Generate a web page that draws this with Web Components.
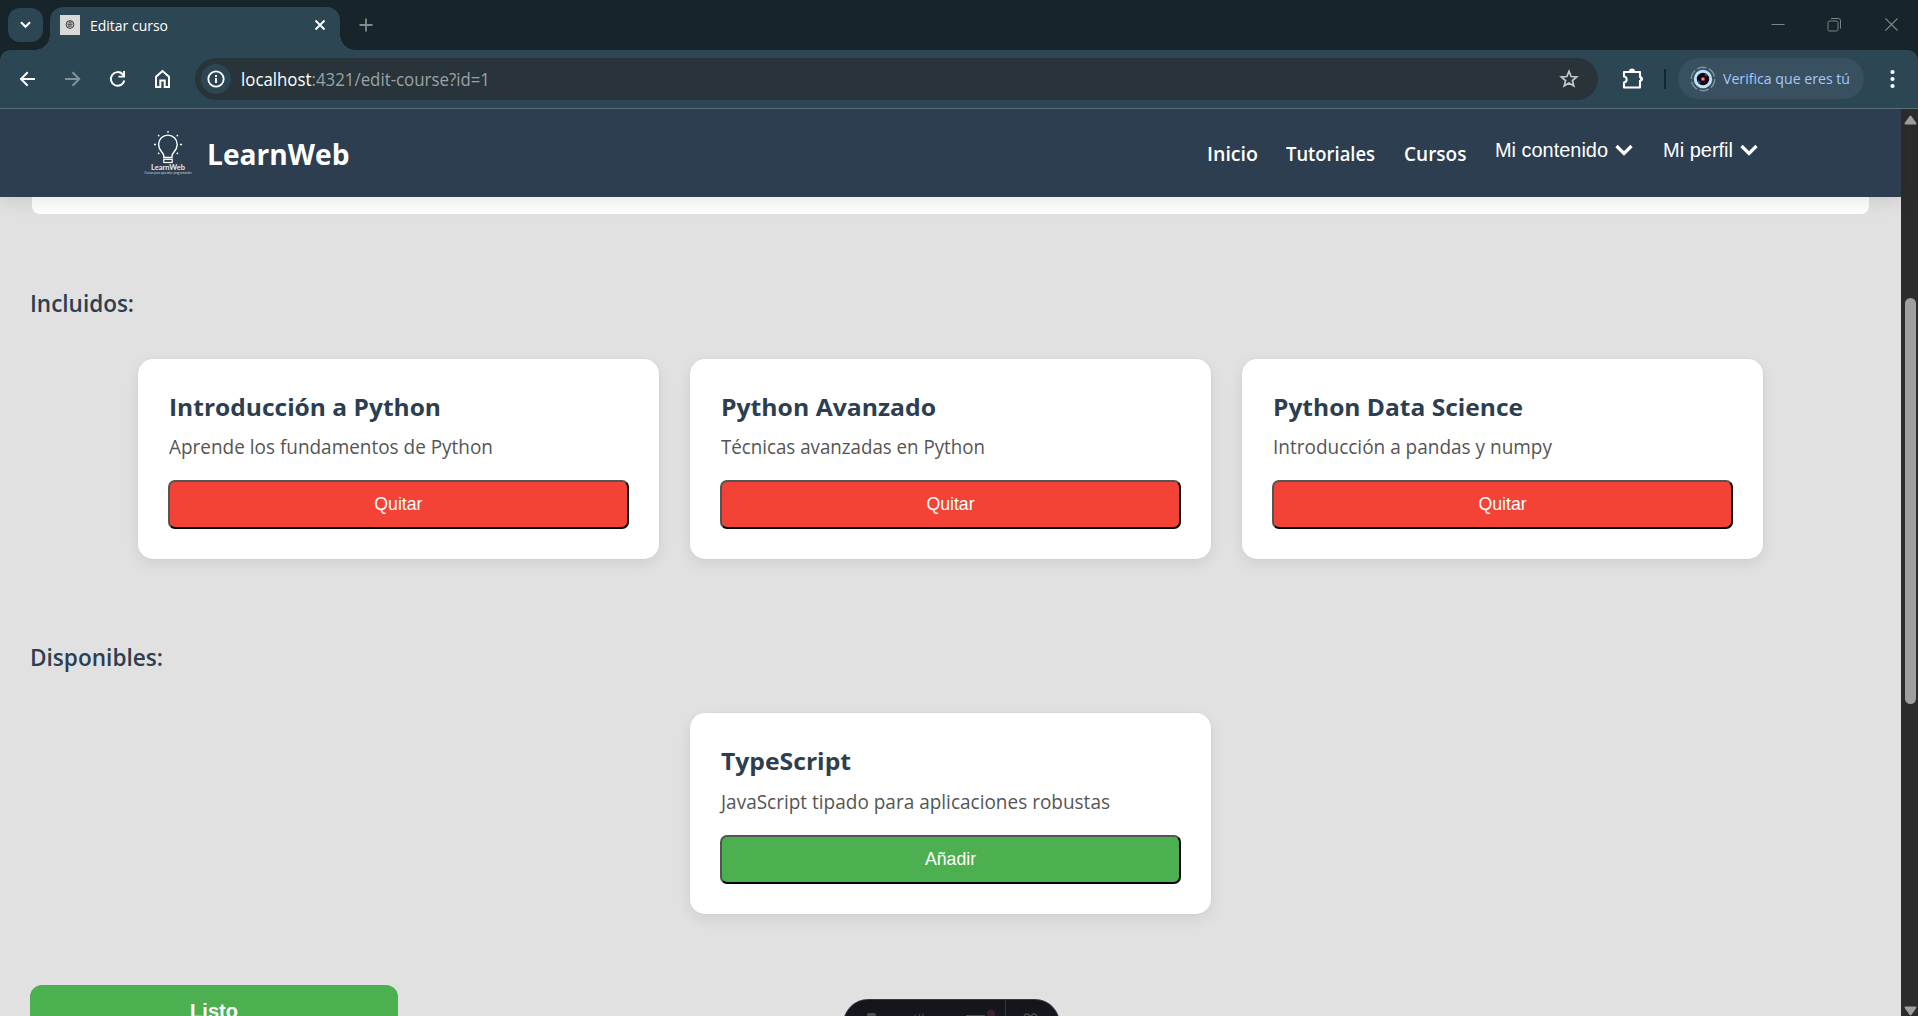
<!DOCTYPE html>
<html lang="es">
<head>
<meta charset="utf-8">
<title>Editar curso</title>
<style>
html,body{margin:0;height:100%;overflow:hidden;background:#e1e1e1}
body{display:flex;flex-direction:column;font-family:"Open Sans","Noto Sans",sans-serif;color:#2c3e50}
</style>
</head>
<body>
<browser-tabs></browser-tabs>
<browser-toolbar></browser-toolbar>
<browser-view>
  <site-header></site-header>
  <course-page>
    <section-title style="margin-top:67px"><fit-text w="104">Incluidos:</fit-text></section-title>
    <card-grid style="margin-top:34px">
      <tutorial-card kind="remove"><fit-text slot="title" w="272">Introducción a Python</fit-text><fit-text slot="desc" w="324">Aprende los fundamentos de Python</fit-text><span>Quitar</span></tutorial-card>
      <tutorial-card kind="remove"><fit-text slot="title" w="215">Python Avanzado</fit-text><fit-text slot="desc" w="264">Técnicas avanzadas en Python</fit-text><span>Quitar</span></tutorial-card>
      <tutorial-card kind="remove"><fit-text slot="title" w="250">Python Data Science</fit-text><fit-text slot="desc" w="279">Introducción a pandas y numpy</fit-text><span>Quitar</span></tutorial-card>
    </card-grid>
    <section-title style="margin-top:76px"><fit-text w="133">Disponibles:</fit-text></section-title>
    <card-grid style="margin-top:34px">
      <tutorial-card kind="add" style="grid-column:2"><fit-text slot="title" w="130">TypeScript</fit-text><fit-text slot="desc" w="389">JavaScript tipado para aplicaciones robustas</fit-text><span>Añadir</span></tutorial-card>
    </card-grid>
    <done-button>Listo</done-button>
  </course-page>
  <scroll-bar slot="bar"></scroll-bar>
  <dev-dock slot="dock"></dev-dock>
</browser-view>
<script>
function define(name, html, ready){
  const t=document.createElement('template'); t.innerHTML=html;
  customElements.define(name, class extends HTMLElement{
    constructor(){super();this.attachShadow({mode:'open'}).append(t.content.cloneNode(true));}
    connectedCallback(){ if(ready) ready(this); }
  });
}

/* One line of text condensed or widened to the width in its "w" attribute. */
define('fit-text',`<style>
:host{display:inline-block;white-space:nowrap}
span{display:inline-block;transform-origin:0 50%}
</style><span><slot></slot></span>`, el=>{
  const s=el.shadowRoot.querySelector('span'), w=+el.getAttribute('w');
  const fit=()=>{s.style.transform='none';el.style.width='auto';const n=s.offsetWidth?s.getBoundingClientRect().width:w;
    el.style.width=w+'px';s.style.transform='scaleX('+w/n+')';};
  fit(); requestAnimationFrame(fit);
});

define('browser-tabs',`<style>
:host{display:flex;height:50px;background:#172429;flex:none;box-sizing:border-box;align-items:flex-start;padding-left:8px}
.menu{width:35px;height:34px;margin-top:8px;border-radius:12px;background:#2d4654;display:grid;place-items:center}
.tab{margin:7px 0 0 7px;width:290px;height:43px;background:#2d4654;border-radius:13px 13px 0 0;display:flex;align-items:center;box-sizing:border-box;padding:0 14px 7px 10px;position:relative;color:#fff;font-size:15px}
.tab:before,.tab:after{content:"";position:absolute;bottom:0;width:15px;height:15px}
.tab:before{left:-15px;background:radial-gradient(circle at 0 0,transparent 14.5px,#2d4654 15px)}
.tab:after{right:-15px;background:radial-gradient(circle at 100% 0,transparent 14.5px,#2d4654 15px)}
fit-text{margin-left:10px;flex:none}
.x{margin-left:auto}
.plus{margin:18px 0 0 18.500px}
.win{margin:17px 19.500px 0 auto;display:flex;gap:42px}
svg{display:block}
</style>
<div class="menu"><svg width="11" height="8" viewBox="0 0 11 8"><path d="M1 1.3 5.5 5.8 10 1.3" fill="none" stroke="#fff" stroke-width="2.1"/></svg></div>
<div class="tab"><svg width="20" height="20"><rect width="20" height="20" fill="#d9d9d9"/><circle cx="10" cy="9.5" r="3.9" fill="#bbb" stroke="#444" stroke-width="1"/><path d="M7.5 9.2h5M8 11h3.5M9 7.2h2.5" stroke="#333" stroke-width=".9"/></svg>
<fit-text w="78">Editar curso</fit-text>
<svg class="x" width="12" height="12" viewBox="0 0 12 12"><path d="M1.5 1.5l9 9M10.5 1.5l-9 9" stroke="#fff" stroke-width="1.8"/></svg></div>
<svg class="plus" width="14" height="14"><path d="M7 .5v13M.5 7h13" stroke="#838b8d" stroke-width="1.8"/></svg>
<div class="win"><svg width="14" height="15"><path d="M.5 7.5h13" stroke="#7c8588"/></svg>
<svg width="15" height="15"><rect x="1" y="4" width="10" height="10" rx="1.5" fill="none" stroke="#7c8588"/><path d="M4 1.5h7.5a2 2 0 0 1 2 2V11.5" fill="none" stroke="#7c8588"/></svg>
<svg width="15" height="15"><path d="M1.5 1.5l12 12M13.500 1.5l-12 12" stroke="#7c8588" stroke-width="1.1"/></svg></div>`);

define('browser-toolbar',`<style>
:host{display:block;height:59px;flex:none;background:#172429}
.bar{height:59px;box-sizing:border-box;background:#2d4654;border-bottom:1px solid #5a7078;border-radius:10px 10px 0 0;display:flex;align-items:center;padding:0 18px 1px 18px}
svg{display:block;flex:none}
.nav{display:flex;gap:25px;width:177px;flex:none}
.omni{width:1403px;height:42px;box-sizing:border-box;border-radius:21px;background:#28343a;display:flex;align-items:center;padding:0 19px 0 6px;flex:none}
.info{width:30px;height:30px;border-radius:50%;background:#2d4654;display:grid;place-items:center}
.url{margin-left:10px;font-size:17.6px;color:#9aa2a6;display:flex;padding-top:1px}
.url b{font-weight:400;color:#fff}
.star{margin-left:auto}
.sep{width:2px;height:20px;background:#17262c;margin:0 12px 0 20px}
.chip{width:186px;height:41px;border-radius:21px;background:#385060;display:flex;align-items:center;box-sizing:border-box;padding-left:11.500px;gap:7px;font-size:14.6px;color:#a8c7fa}
.chip fit-text{padding-bottom:2px}
.dots{margin-left:24px}
</style><div class="bar">
<div class="nav">
<svg width="20" height="20" viewBox="0 0 20 20"><path d="M17 10H3.500M9.700 3.300 3 10l6.700 6.700" fill="none" stroke="#fff" stroke-width="2"/></svg>
<svg width="20" height="20" viewBox="0 0 20 20"><path d="M2 10h14M9.500 3.300 16.200 10l-6.700 6.700" fill="none" stroke="#82929a" stroke-width="2"/></svg>
<svg width="20" height="20" viewBox="0 0 20 20"><path d="M16.300 11.500A6.800 6.800 0 1 1 14.600 5.200L16 6.700" fill="none" stroke="#fff" stroke-width="2"/><path d="M17 2v6.500h-6.500V6.700h4.600V2z" fill="#fff"/></svg>
<svg width="20" height="20" viewBox="0 0 20 20"><path d="M3 18V7.700L9.500 2 16 7.700V18h-4.300v-6.500H7.300V18z" fill="none" stroke="#fff" stroke-width="2"/></svg>
</div>
<div class="omni"><div class="info"><svg width="18" height="18"><circle cx="9" cy="9" r="7.700" fill="none" stroke="#fff" stroke-width="1.800"/><path d="M9 8v5M9 5v2" stroke="#fff" stroke-width="1.900"/></svg></div>
<div class="url"><fit-text w="249"><b>localhost</b>:4321/edit-course?id=1</fit-text></div>
<svg class="star" width="20" height="20" viewBox="0 0 20 20"><path d="M10 2.300l2.100 5.200 5.600.4-4.300 3.600 1.400 5.500L10 14l-4.800 3 1.400-5.500L2.300 7.900l5.600-.4z" fill="none" stroke="#c4c8ca" stroke-width="1.700"/></svg></div>
<svg style="margin-left:23px" width="23" height="23" viewBox="0 0 23 23"><path d="M3 5h16v5.300h.8a1.800 1.800 0 0 1 0 3.400H19V20.500H3V15.500c3.500-.5 3.500-5.500 0-6z" fill="none" stroke="#fff" stroke-width="2.100" stroke-linejoin="round"/><path d="M8 4.500a3 3 0 0 1 6 0z" fill="#fff"/><path d="M19 9.500a3 3 0 0 1 0 5z" fill="#fff"/></svg>
<div class="sep"></div>
<div class="chip"><svg width="26" height="26"><circle cx="13" cy="13" r="11.700" fill="none" stroke="#82939e" stroke-width="1.400" stroke-dasharray="9.500 2.700"/><circle cx="13" cy="13" r="7.700" fill="#080713" stroke="#bfe2fb" stroke-width="3"/><path d="M15 8l2 2M8 15l2 2" stroke="#4b4964" stroke-width="2"/><circle cx="13" cy="13" r="2.100" fill="#e9258c"/><circle cx="13" cy="13" r=".9" fill="#ffcf33"/></svg><fit-text w="127">Verifica que eres tú</fit-text></div>
<svg class="dots" width="9" height="20"><g fill="#fff"><circle cx="4.500" cy="3" r="2.100"/><circle cx="4.500" cy="10" r="2.100"/><circle cx="4.500" cy="17" r="2.100"/></g></svg>
</div>`);

define('browser-view',`<style>
:host{display:flex;flex:1;min-height:0;overflow:hidden;position:relative}
.doc{flex:1;min-width:0;display:flex;flex-direction:column}
</style><div class="doc"><slot></slot></div><slot name="bar"></slot><slot name="dock"></slot>`);

define('site-header',`<style>
:host{display:flex;height:88px;flex:none;background:#2c3e50;box-shadow:0 4px 18px rgba(0,0,0,.1);position:relative;z-index:2;box-sizing:border-box;padding:0 143px 0 143px;color:#fff}
svg{display:block;flex:none}
.logo{margin-top:20px}
.name{font-size:28.300px;font-weight:700;margin:23px 0 0 14px;line-height:44px}
nav{display:flex;margin-left:auto;font-size:19.200px;font-weight:600;line-height:30px}
nav fit-text{margin-top:30px;margin-right:28.500px}
.m{display:flex;align-items:center;gap:7px;height:30px;margin-top:26px;font:20px/30px "Liberation Sans",Arial,sans-serif}
.m fit-text{margin:0}
.m+.m{margin-left:30.500px}
</style>
<svg class="logo" width="50" height="50" viewBox="0 0 50 50"><g fill="none" stroke="#fff" stroke-width="1.400"><path d="M20.800 28.500v-1.600c0-3.500-5.200-5-5.200-11.500a9.300 9.300 0 0 1 18.600 0c0 6.500-5.200 8-5.200 11.500v1.600z"/><rect x="20.800" y="30.300" width="8.400" height="3.200" stroke-width="1.200"/><path d="M25 2v1.800M15.200 6l1 1.200M34.800 6l-1 1.200M11 15.500h2M37 15.500h2M15.200 25l1-1.200M34.800 25l-1-1.200"/></g><text x="8" y="41" font-family="Lato,sans-serif" font-weight="700" font-size="6.500" fill="#e8ebee" textLength="34" lengthAdjust="spacingAndGlyphs">LearnWeb</text><text x="1.500" y="45" font-family="Lato,sans-serif" font-size="3" fill="#cfd5da" textLength="47" lengthAdjust="spacingAndGlyphs">Cursos para aprender programación</text></svg>
<div class="name"><fit-text w="142.500">LearnWeb</fit-text></div>
<nav><fit-text w="51">Inicio</fit-text><fit-text w="89">Tutoriales</fit-text><fit-text w="62.500">Cursos</fit-text>
<div class="m"><fit-text w="113">Mi contenido</fit-text><svg width="18" height="12"><path d="M1.500 2 9 9.500 16.500 2" fill="none" stroke="#fff" stroke-width="3.200"/></svg></div>
<div class="m"><fit-text w="70">Mi perfil</fit-text><svg width="18" height="12"><path d="M1.500 2 9 9.500 16.500 2" fill="none" stroke="#fff" stroke-width="3.200"/></svg></div></nav>`);

define('course-page',`<style>
:host{display:flex;flex-direction:column;align-items:stretch;padding:0 30px}
.panel{height:17px;margin:0 2px;background:#fff;border-radius:0 0 8px 8px;flex:none}
</style><div class="panel"></div><slot></slot>`);

define('section-title',`<style>
:host{display:block;height:44px;line-height:44px;font-size:24px;font-weight:600;flex:none;color:#2c3e50}
</style><slot></slot>`);

define('card-grid',`<style>
:host{display:grid;grid-template-columns:repeat(3,1fr);gap:31.250px;width:1625px;align-self:center;flex:none}
</style><slot></slot>`);

define('tutorial-card',`<style>
:host{display:flex;flex-direction:column;box-sizing:border-box;height:200px;background:#fff;border-radius:15px;padding:30px;box-shadow:0 5px 15px rgba(0,0,0,.08),0 0 0 1px rgba(0,0,0,.015)}
h3{margin:0 0 0 .5px;height:36px;line-height:36px;font-size:24px;font-weight:700;color:#2c3e50}
p{margin:9px 0 0 .5px;height:26px;line-height:26px;font-size:19.200px;color:#555}
button{margin:20px 0 0;height:49px;border:2px outset #000;border-radius:7px;font:17.700px "Liberation Sans",Arial,sans-serif;color:#fff;padding:0;background:#f44336}
:host([kind=add]){height:201px}
:host([kind=add]) p{margin-top:10px}
:host([kind=add]) button{background:#4caf50}
</style><h3><slot name="title"></slot></h3><p><slot name="desc"></slot></p><button><slot></slot></button>`);

define('done-button',`<style>
:host{display:block;width:368px;height:60px;flex:none;margin-top:71px;border-radius:12px;background:#4caf50;color:#fff;font:700 20px/53px "Liberation Sans",Arial,sans-serif;text-align:center}
</style><slot></slot>`);

define('scroll-bar',`<style>
:host{display:flex;flex-direction:column;align-items:center;width:17px;flex:none;background:#2c2c2c;height:100%;box-sizing:border-box;padding:6px 0 0 1px}
i{display:block;width:11px;height:406px;margin:173px 0 302px;border-radius:6px;background:#9f9f9f;flex:none}
svg{display:block;flex:none}
</style><svg width="13" height="10"><path d="M6.500 1.500 11.500 8.500H1.500z" fill="#9f9f9f" stroke="#9f9f9f" stroke-width="2" stroke-linejoin="round"/></svg><i></i><svg width="13" height="10"><path d="M6.500 8.500 11.500 1.500H1.500z" fill="#9f9f9f" stroke="#9f9f9f" stroke-width="2" stroke-linejoin="round"/></svg>`);

define('dev-dock',`<style>
:host{display:block;position:absolute;left:842.500px;bottom:0;width:217px;height:17px;overflow:hidden}
div{height:50px;box-sizing:border-box;border:1px solid #343841;border-radius:27px;background:linear-gradient(#13151a,#201c28)}
svg{position:absolute;left:0;top:0}
</style><div></div><svg width="216" height="17"><path d="M24 17v-1.500a1.500 1.500 0 0 1 1.500-1.500h6a1.500 1.500 0 0 1 1.500 1.500V17z" fill="#4b4c50"/><path d="M72 17v-1.500M76.500 17v-2M80 17v-2.500" stroke="#44464b" stroke-width="1.300"/><path d="M123 16.500h19" stroke="#4b4c50"/><circle cx="148" cy="15" r="4.200" fill="#3d2030"/><path d="M162.500 1v16" stroke="#343841"/><path d="M181 17q3-4 6 0M188 17q3-4 6 0" fill="none" stroke="#4b4c50" stroke-width="1.500"/></svg>`);
</script>
</body>
</html>
